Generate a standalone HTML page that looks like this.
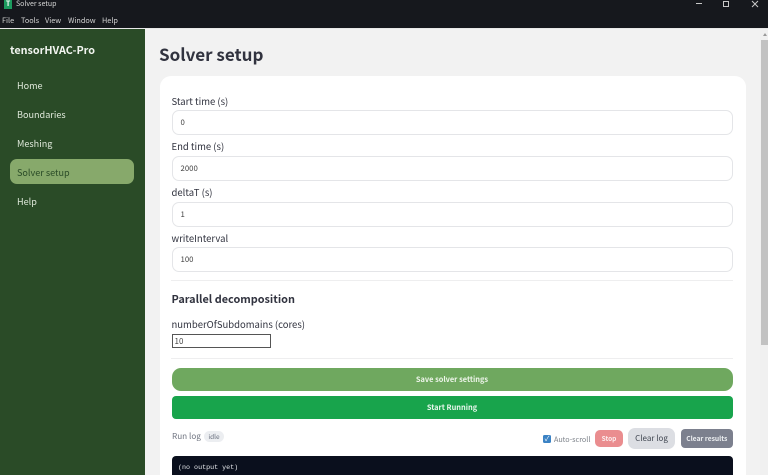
<!DOCTYPE html>
<html><head><meta charset="utf-8"><style>
html,body{margin:0;padding:0;width:768px;height:475px;overflow:hidden;background:#f2f2f2;}
#r{position:relative;width:768px;height:475px;overflow:hidden;background:#f2f2f2;font-family:"Noto Sans CJK SC","Liberation Sans",sans-serif;}
.a{position:absolute;white-space:nowrap;}
.lab{left:171.5px;font-size:9.5px;color:#31333f;line-height:14px;}
.inp{left:171.5px;width:559px;height:23px;box-sizing:content-box;background:#fff;border:1px solid #e4e5e8;border-radius:7px;font-size:7.8px;color:#444;line-height:23px;text-indent:8px;}
.nav{left:17px;font-size:9.1px;color:#dfe8da;line-height:14px;}
.menu{top:16px;font-size:7.3px;color:#d4d4d4;line-height:11px;}
hr{position:absolute;margin:0;border:0;height:1px;background:#eeeeef;left:171px;width:562px;}
.b{text-align:center;border-radius:6px;font-weight:bold;}
</style></head><body><div id="r">
<div class="a" style="left:0;top:0;width:768px;height:29px;background:#16181d"></div>
<div class="a" style="left:0;top:28px;width:768px;height:1px;background:#e8e8e8"></div>
<div class="a" style="left:4px;top:0;width:8px;height:9px;background:#1c9a5e;color:#fff;font-size:7px;font-weight:bold;line-height:9px;text-align:center">T</div>
<div class="a" style="left:16px;top:-1px;font-size:7px;color:#d8d8d8;line-height:10px">Solver setup</div>
<div class="a menu" style="left:2px">File</div>
<div class="a menu" style="left:21px">Tools</div>
<div class="a menu" style="left:45px">View</div>
<div class="a menu" style="left:68px">Window</div>
<div class="a menu" style="left:102px">Help</div>
<svg class="a" style="left:690px;top:0" width="78" height="9" fill="none" stroke="#c8c8c8" stroke-width="1"><path d="M6 3.5H12"/><path d="M33.500 1.500h5v5h-5z"/><path d="M62 1L68 7M68 1L62 7"/></svg>

<div class="a" style="left:0;top:29px;width:145px;height:446px;background:#2a4b27"></div>
<div class="a" style="left:10px;top:43px;font-size:10.8px;font-weight:bold;color:#f2f5f0;line-height:15px">tensorHVAC-Pro</div>
<div class="a nav" style="top:78px">Home</div>
<div class="a nav" style="top:107px">Boundaries</div>
<div class="a nav" style="top:136px">Meshing</div>
<div class="a" style="left:10px;top:159px;width:124px;height:25px;background:#87a96b;border-radius:7px"></div>
<div class="a nav" style="top:165px;color:#2a4b27">Solver setup</div>
<div class="a nav" style="top:194px">Help</div>

<div class="a" style="left:159px;top:42px;font-size:17px;font-weight:bold;color:#31333f;line-height:23px">Solver setup</div>
<div class="a" style="left:160px;top:76px;width:586px;height:399px;background:#fff;border-radius:11px 11px 0 0"></div>

<div class="a lab" style="top:94px">Start time (s)</div>
<div class="a inp" style="top:110px">0</div>
<div class="a lab" style="top:139px">End time (s)</div>
<div class="a inp" style="top:156px">2000</div>
<div class="a lab" style="top:185px">deltaT (s)</div>
<div class="a inp" style="top:201.500px">1</div>
<div class="a lab" style="top:231px">writeInterval</div>
<div class="a inp" style="top:247px">100</div>
<hr style="top:280px">
<div class="a" style="left:171.500px;top:292px;font-size:10.9px;font-weight:bold;color:#31333f;line-height:15px">Parallel decomposition</div>
<div class="a lab" style="top:317px">numberOfSubdomains (cores)</div>
<div class="a" style="left:171.500px;top:334px;width:97px;height:12px;background:#fff;border:1px solid #555;font-size:8px;color:#444;line-height:13px;text-indent:2px">10</div>
<hr style="top:358px">
<div class="a b" style="left:171.500px;top:368px;width:561px;height:23px;background:#6fa85f;border-radius:9px;color:#eef5ea;font-size:7.400px;line-height:24px">Save solver settings</div>
<div class="a b" style="left:171.500px;top:396px;width:561px;height:23px;background:#18a44c;border-radius:4px;color:#e8f7ed;font-size:7.400px;line-height:24px">Start Running</div>

<div class="a" style="left:172px;top:430px;font-size:8.200px;color:#6f7480;line-height:13px">Run log</div>
<div class="a" style="left:204px;top:431px;width:20px;height:11px;background:#eceef1;border-radius:6px;font-size:6.500px;color:#6b7280;line-height:11px;text-align:center">idle</div>
<div class="a" style="left:543px;top:435px;width:8px;height:8px;background:#3b82c4;border-radius:1.500px;color:#fff;font-size:7px;line-height:8px;text-align:center">✓</div>
<div class="a" style="left:554px;top:435px;font-size:7.200px;color:#7b8088;line-height:11px">Auto-scroll</div>
<div class="a b" style="left:595px;top:430px;width:28px;height:17px;background:#ea8d8f;color:#fdeeee;font-size:6.500px;line-height:17px;border-radius:5px">Stop</div>
<div class="a" style="left:628px;top:428px;width:47px;height:21px;background:#dcdee3;color:#3f4550;font-size:8px;line-height:21px;border-radius:7px;text-align:center">Clear log</div>
<div class="a b" style="left:680.500px;top:429px;width:52.500px;height:19px;background:#7c808e;color:#eceef1;font-size:6.700px;line-height:19px;border-radius:4px">Clear results</div>

<div class="a" style="left:171.500px;top:456px;width:561.500px;height:30px;background:#0a0f1d;border-radius:4px"></div>
<div class="a" style="left:178px;top:463px;font-family:'Liberation Mono',monospace;font-size:6.700px;color:#e5e7eb;line-height:11px">(no output yet)</div>

<div class="a" style="left:760px;top:29px;width:8px;height:446px;background:#f0f0f0"></div>
<div class="a" style="left:761px;top:40px;width:7px;height:305px;background:#c2c2c2"></div>
<div class="a" style="left:763px;top:33px;width:0;height:0;border-left:2.500px solid transparent;border-right:2.500px solid transparent;border-bottom:3px solid #999"></div>
</div></body></html>
